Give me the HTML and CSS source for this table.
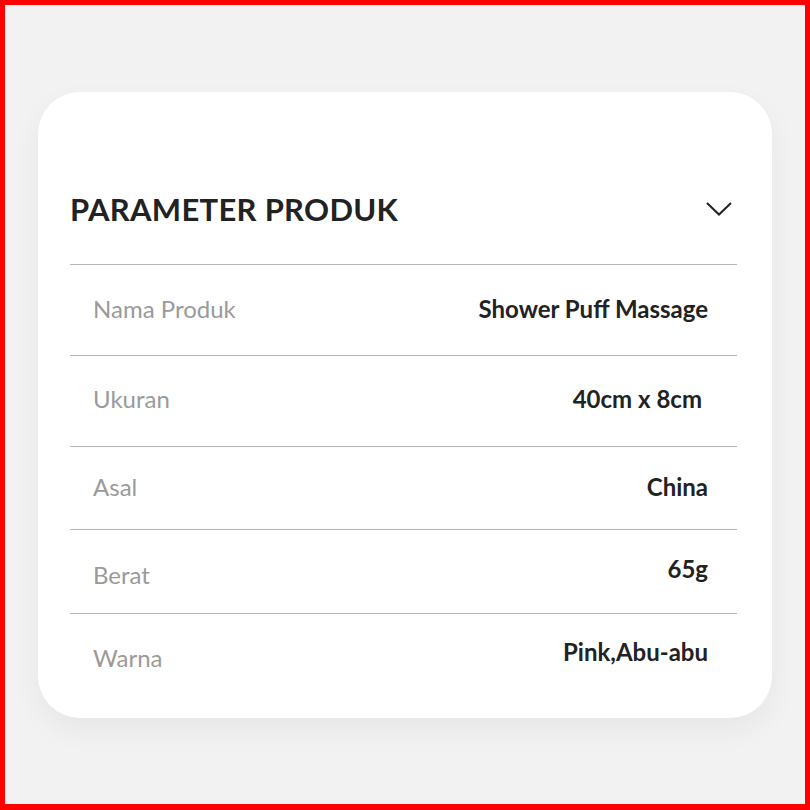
FILE: index.html
```html
<!DOCTYPE html>
<html lang="id">
<head>
<meta charset="utf-8">
<title>Parameter Produk</title>
<link rel="stylesheet" href="styles.css">
</head>
<body>
<div class="frame">
  <section class="card">
    <header class="card-head">
      <h2 class="title">PARAMETER PRODUK</h2>
      <svg class="chevron" width="26" height="14" viewBox="0 0 26 14" aria-hidden="true">
        <polyline points="1,1 13,12.5 25,1" fill="none" stroke="#222" stroke-width="2"/>
      </svg>
    </header>
    <div class="row row-1">
      <span class="label">Nama Produk</span>
      <span class="value">Shower Puff Massage</span>
    </div>
    <div class="row row-2">
      <span class="label">Ukuran</span>
      <span class="value value-pad">40cm x 8cm</span>
    </div>
    <div class="row row-3">
      <span class="label">Asal</span>
      <span class="value">China</span>
    </div>
    <div class="row row-4 row-shift">
      <span class="label">Berat</span>
      <span class="value">65g</span>
    </div>
    <div class="row row-5 row-last">
      <span class="label">Warna</span>
      <span class="value">Pink,Abu-abu</span>
    </div>
  </section>
</div>
</body>
</html>
```

FILE: styles.css
```css
* { box-sizing: border-box; }
html, body { margin: 0; padding: 0; }
body {
  width: 810px;
  height: 810px;
  font-family: "Lato", "Liberation Sans", sans-serif;
}
.frame {
  width: 810px;
  height: 810px;
  border: 5px solid #ff0000;
  border-bottom-width: 6px;
  background: #f2f2f2;
  padding: 87px 33px 0 33px;
}
.card {
  width: 734px;
  height: 626px;
  background: #ffffff;
  border-radius: 42px;
  box-shadow: 0 12px 30px rgba(0, 0, 0, 0.05);
  padding: 0 35px 0 32px;
}
.card-head {
  display: flex;
  justify-content: space-between;
  align-items: center;
  height: 173px;
  padding-top: 98px;
  padding-bottom: 37px;
  border-bottom: 1px solid #b4b4b4;
}
.title {
  margin: 0;
  font-family: "Lato", sans-serif;
  font-weight: 700;
  font-size: 31px;
  line-height: 38px;
  color: #222222;
  letter-spacing: 0.3px;
}
.chevron {
  margin-right: 5px;
}
.row {
  display: flex;
  justify-content: space-between;
  align-items: center;
  border-bottom: 1px solid #b4b4b4;
  padding: 0 29px 0 23px;
}
.row-1 { height: 91px; }
.row-2 { height: 91px; }
.row-3 { height: 83px; }
.row-4 { height: 84px; }
.row-last {
  height: 105px;
  border-bottom: none;
  align-items: flex-start;
  padding-top: 29px;
}
.label {
  font-family: "Lato", sans-serif;
  font-weight: 400;
  font-size: 24px;
  line-height: 30px;
  color: #9a9a9a;
}
.value {
  font-family: "Lato", sans-serif;
  font-weight: 700;
  font-size: 24px;
  line-height: 30px;
  color: #222222;
}
.value-pad { margin-right: 6px; }
.row-shift .value { margin-bottom: 6px; }
.row-last .value { margin-top: -6px; }
.row-3 .label, .row-3 .value { margin-top: -2px; }
.row-1 .label, .row-1 .value { margin-top: -2px; }
.row-2 .label, .row-2 .value { margin-top: -4px; }
.row-4 .label { margin-top: 6px; }
```
